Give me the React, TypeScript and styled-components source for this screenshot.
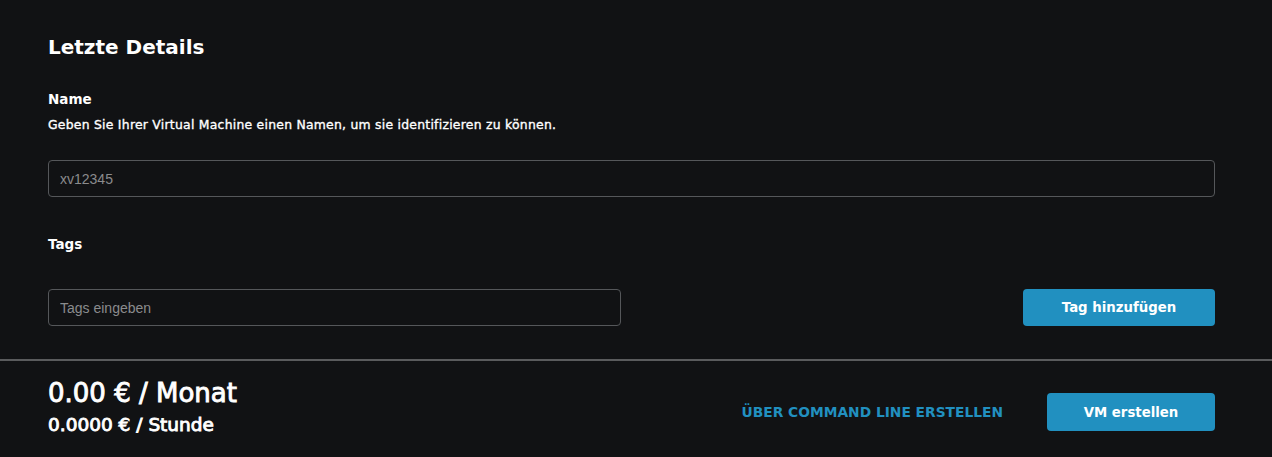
import React from "react";
import styled, { createGlobalStyle } from "styled-components";

const Global = createGlobalStyle`
  html, body { margin: 0; padding: 0; background: #111214; }
  body { font-family: "DejaVu Sans", "Noto Sans", sans-serif; color: #fff; }
  * { box-sizing: border-box; }
`;

const Page = styled.div`
  width: 1272px;
  height: 457px;
  background: #111214;
  display: flex;
  flex-direction: column;
`;

const Main = styled.section`
  padding: 34px 57px 0 48px;
  height: 359px;
  display: flex;
  flex-direction: column;
`;

const Title = styled.h2`
  margin: 0;
  font-size: 20px;
  font-weight: 700;
  line-height: 26px;
`;

const Label = styled.div<{ $top: number }>`
  margin-top: ${(p) => p.$top}px;
  font-size: 13.5px;
  font-weight: 700;
  line-height: 18px;
`;

const Hint = styled.div`
  margin-top: 9px;
  font-size: 12.4px;
  font-weight: 400;
  line-height: 16px;
  letter-spacing: 0.25px;
  -webkit-text-stroke: 0.35px #fff;
`;

const Input = styled.input<{ $width?: string }>`
  width: ${(p) => p.$width || "100%"};
  height: 37px;
  background: transparent;
  border: 1px solid #55575a;
  border-radius: 4px;
  padding: 0 11px;
  font-family: "Liberation Sans", Arial, sans-serif;
  font-size: 14px;
  color: #ddd;
  outline: none;
  &::placeholder { color: #8a8b8d; }
`;

const FieldRow = styled.div<{ $top: number }>`
  margin-top: ${(p) => p.$top}px;
  display: flex;
  justify-content: space-between;
  align-items: center;
`;

const Button = styled.button<{ $width: number; $height: number }>`
  width: ${(p) => p.$width}px;
  height: ${(p) => p.$height}px;
  background: #2190c0;
  border: none;
  border-radius: 4px;
  color: #fff;
  font-family: inherit;
  font-size: 13.3px;
  font-weight: 700;
  cursor: pointer;
`;

const Divider = styled.hr`
  margin: 0;
  border: none;
  height: 2px;
  background: #5a5b5d;
`;

const Footer = styled.footer`
  flex: 1;
  display: flex;
  align-items: center;
  justify-content: space-between;
  padding: 0 57px 0 48px;
`;

const Prices = styled.div`
  display: flex;
  flex-direction: column;
  padding-bottom: 4px;
`;

const Monthly = styled.div`
  font-size: 26px;
  font-weight: 400;
  line-height: 30px;
  -webkit-text-stroke: 0.9px #fff;
`;

const Hourly = styled.div`
  font-size: 18.5px;
  font-weight: 400;
  line-height: 22px;
  margin-top: 6px;
  -webkit-text-stroke: 0.9px #fff;
`;

const Actions = styled.div`
  display: flex;
  align-items: center;
  gap: 44px;
  padding-top: 6px;
`;

const LinkButton = styled.a`
  color: #2190c0;
  font-size: 13.8px;
  font-weight: 700;
  text-decoration: none;
  cursor: pointer;
`;

export default function App() {
  return (
    <Page>
      <Global />
      <Main>
        <Title>Letzte Details</Title>
        <Label $top={30}>Name</Label>
        <Hint>Geben Sie Ihrer Virtual Machine einen Namen, um sie identifizieren zu können.</Hint>
        <FieldRow $top={27}>
          <Input placeholder="xv12345" />
        </FieldRow>
        <Label $top={38}>Tags</Label>
        <FieldRow $top={36}>
          <Input $width="573px" placeholder="Tags eingeben" />
          <Button $width={192} $height={37}>Tag hinzufügen</Button>
        </FieldRow>
      </Main>
      <Divider />
      <Footer>
        <Prices>
          <Monthly>0.00 € / Monat</Monthly>
          <Hourly>0.0000 € / Stunde</Hourly>
        </Prices>
        <Actions>
          <LinkButton>ÜBER COMMAND LINE ERSTELLEN</LinkButton>
          <Button $width={168} $height={38}>VM erstellen</Button>
        </Actions>
      </Footer>
    </Page>
  );
}
